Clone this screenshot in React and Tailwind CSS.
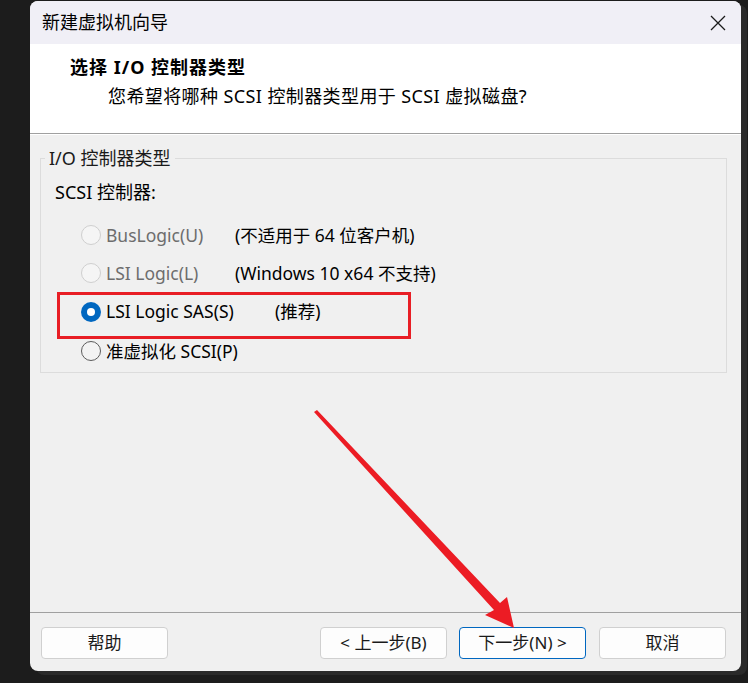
import React from "react";

const font = { fontFamily: '"Noto Sans", "Noto Sans CJK SC", sans-serif' };

function Radio({ state }) {
  if (state === "checked") {
    return (
      <span className="w-[20px] h-[20px] rounded-full bg-[#0067c0] flex items-center justify-center shrink-0">
        <span className="w-[8px] h-[8px] rounded-full bg-white" />
      </span>
    );
  }
  if (state === "disabled") {
    return <span className="w-[20px] h-[20px] rounded-full border border-[#cfcfcf] bg-[#f5f5f5] shrink-0" />;
  }
  return <span className="w-[20px] h-[20px] rounded-full border border-[#5c5c5c] bg-[#f3f3f3] shrink-0" />;
}

function Option({ state, label, note, noteX, h }) {
  const disabled = state === "disabled";
  return (
    <div className={`flex items-center whitespace-nowrap ${h}`}>
      <Radio state={state} />
      <span className={`ml-[5px] w-[129px] shrink-0 ${disabled ? "text-[#6d6d6d]" : "text-black"}`}>{label}</span>
      {note && <span className={`${noteX} text-black`}>{note}</span>}
    </div>
  );
}

function Button({ children, primary }) {
  return (
    <button
      className={`w-[127px] h-[32px] rounded-[4px] bg-[#fdfdfd] text-[17px] text-[#1a1a1a] border ${
        primary ? "border-[#0067c0]" : "border-[#d0d0d0]"
      }`}
    >
      {children}
    </button>
  );
}

export default function App() {
  return (
    <div className="w-[748px] h-[683px] bg-[#1c1c1c] relative overflow-hidden" style={font}>
      <div className="ml-[30px] mt-[1px] w-[711px] h-[670px] rounded-[8px] overflow-hidden flex flex-col bg-[#f0f0f0] shadow-[6px_4px_0_#2a2a2a]">
        {/* title bar */}
        <div className="h-[43px] bg-[#f0eff6] flex items-center justify-between pl-[12px] pr-[15px] shrink-0">
          <span className="text-[18px] text-black">新建虚拟机向导</span>
          <svg width="16" height="16" viewBox="0 0 16 16">
            <path d="M1 1 L15 15 M15 1 L1 15" stroke="#1a1a1a" strokeWidth="1.3" fill="none" />
          </svg>
        </div>

        {/* header */}
        <div className="h-[90px] bg-white border-b border-[#a0a0a0] shrink-0 pl-[40px] pt-[11px]">
          <div className="text-[18px] font-bold tracking-[1px] text-black leading-[24px]">选择 I/O 控制器类型</div>
          <div className="text-[18px] tracking-[0.4px] text-black leading-[24px] mt-[5px] pl-[38px]">
            您希望将哪种 SCSI 控制器类型用于 SCSI 虚拟磁盘?
          </div>
        </div>
        <div className="h-px bg-white shrink-0" />

        {/* body */}
        <div className="flex-1 px-[10px] pt-[12px] text-[17.5px]">
          <fieldset className="border border-[#dcdcdc] h-[226px] w-[687px]">
            <legend className="ml-[4px] px-[4px] text-[18px] text-[#1a1a1a] leading-[22px]">I/O 控制器类型</legend>
            <div className="pl-[14px] mt-[11px] text-[18px] leading-[24px]">SCSI 控制器:</div>
            <div className="pl-[40px] mt-[12px]">
              <Option state="disabled" label="BusLogic(U)" note="(不适用于 64 位客户机)" h="h-[38px]" />
              <Option state="disabled" label="LSI Logic(L)" note="(Windows 10 x64 不支持)" h="h-[38px]" />
              <Option state="checked" label="LSI Logic SAS(S)" note="(推荐)" noteX="ml-[40px]" h="h-[39px]" />
              <Option state="normal" label="准虚拟化 SCSI(P)" h="h-[40px]" />
            </div>
          </fieldset>
        </div>

        {/* footer */}
        <div className="h-px bg-[#a0a0a0] shrink-0" />
        <div className="h-[58px] shrink-0 flex items-start pt-[14px] pl-[11px] pr-[15px]">
          <Button>帮助</Button>
          <div className="ml-auto flex gap-[13px]">
            <div className="flex gap-[12px]">
              <Button>&lt; 上一步(B)</Button>
              <Button primary>下一步(N) &gt;</Button>
            </div>
            <Button>取消</Button>
          </div>
        </div>
      </div>

      {/* red highlight box */}
      <div className="absolute left-[57px] top-[292px] w-[354px] h-[47px] border-[3px] border-[#e81e25]" />

      {/* red arrow */}
      <svg className="absolute left-0 top-0 pointer-events-none" width="748" height="683">
        <polygon points="314,412 317,410 500,603 507,597 514,628 485,615 494,610" fill="#ec1c24" />
      </svg>
    </div>
  );
}
